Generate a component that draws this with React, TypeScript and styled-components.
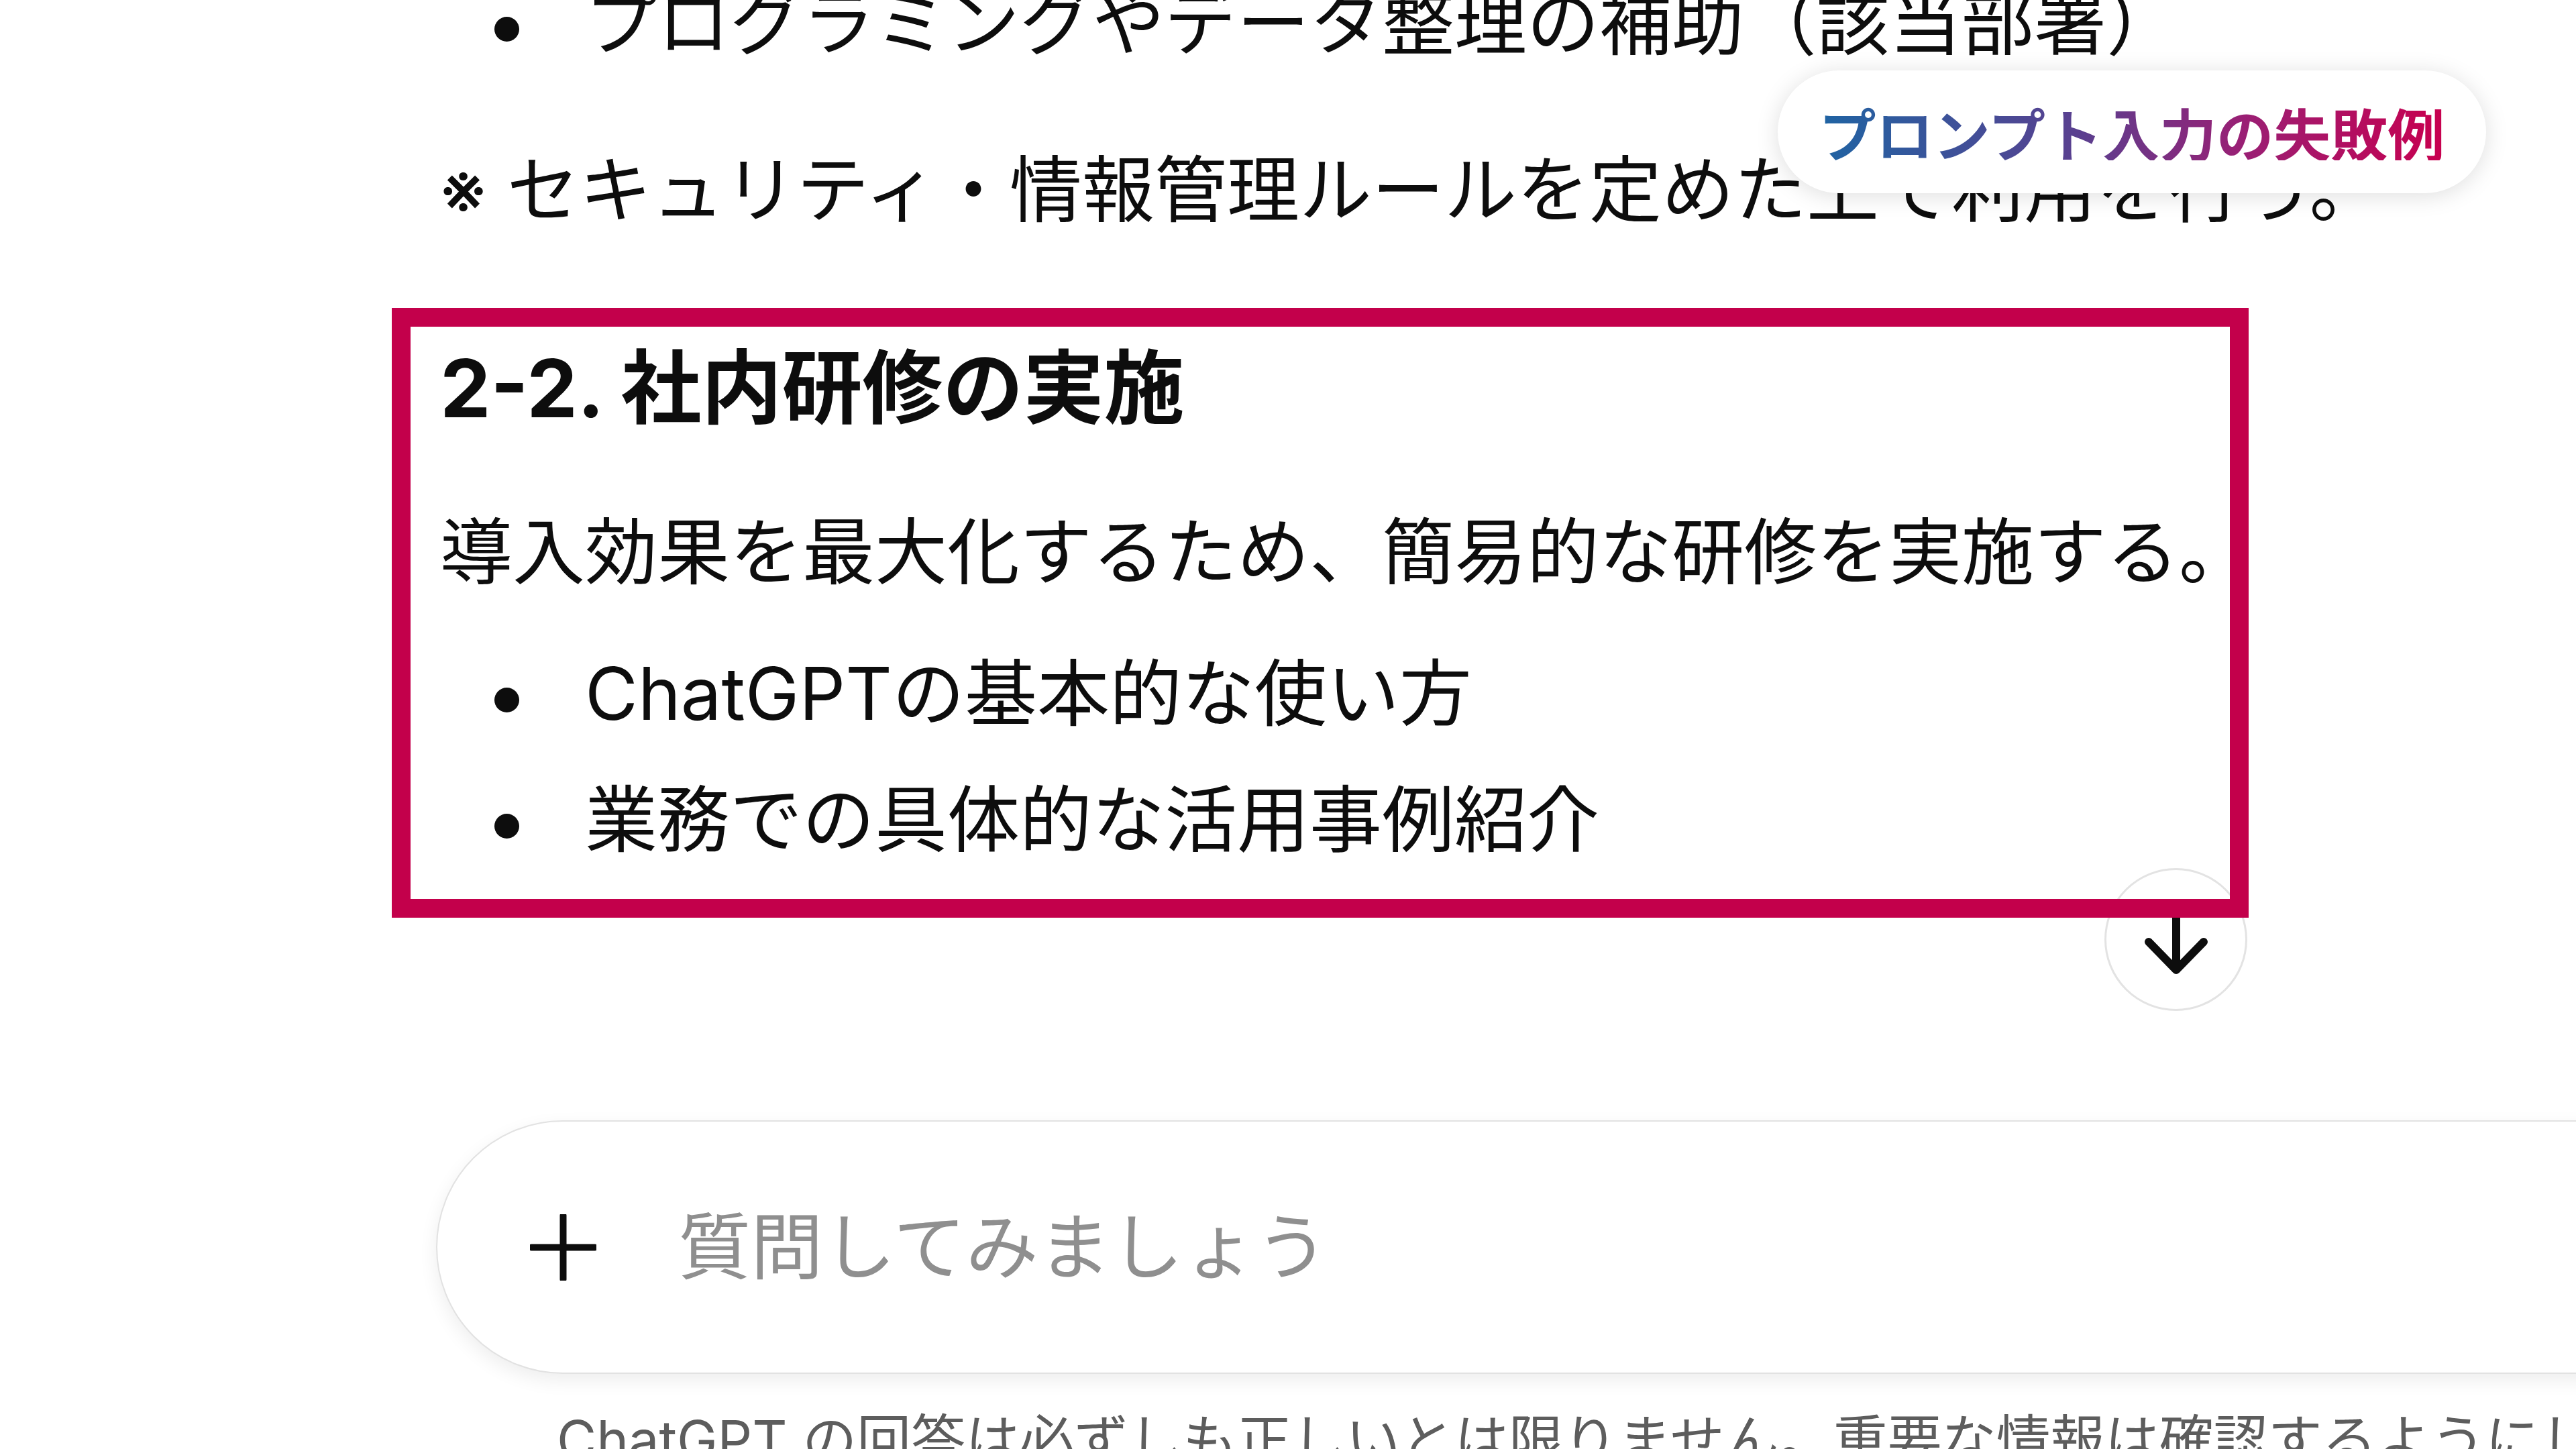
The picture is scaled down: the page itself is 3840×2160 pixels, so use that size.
import styled, { createGlobalStyle } from "styled-components";

const GlobalStyle = createGlobalStyle`
  html, body {
    margin: 0;
    padding: 0;
    background: #fff;
  }
  body {
    font-family: Inter, "Noto Sans CJK JP", sans-serif;
    color: #0d0d0d;
  }
  * {
    box-sizing: border-box;
  }
`;

const Page = styled.div`
  position: relative;
  z-index: 0;
  width: 3840px;
  height: 2160px;
  overflow: hidden;
  background: #fff;
  display: flex;
  flex-direction: column;
`;

const Thread = styled.main`
  margin-left: 584px;
  width: 2768px;
  display: flex;
  flex-direction: column;
`;

const Lead = styled.div`
  padding-left: 72px;
  padding-top: 1px;
  margin-top: -52px;
`;

const List = styled.ul<{ $top?: number }>`
  list-style: none;
  margin: ${(p) => p.$top ?? 0}px 0 0;
  padding: 0;
  display: flex;
  flex-direction: column;
  gap: 18px;
`;

const Item = styled.li`
  display: flex;
  align-items: center;
  font-size: 108px;
  line-height: 170px;
  white-space: nowrap;
`;

const Dot = styled.span`
  flex: 0 0 auto;
  width: 37px;
  height: 37px;
  border-radius: 50%;
  background: #0d0d0d;
  margin: 18px 98px 0 81px;
`;

const Note = styled.p`
  margin: 79px 0 0;
  font-size: 108px;
  line-height: 170px;
  white-space: nowrap;
`;

const Highlight = styled.section`
  position: relative;
  margin-top: 91px;
  border: 28px solid #c3004b;
  padding: 17px 0 33px 44px;
`;

const Heading = styled.h3`
  margin: 0;
  font-size: 120px;
  line-height: 150px;
  font-weight: 700;
  white-space: nowrap;
`;

const Paragraph = styled.p`
  margin: 84px 0 0;
  font-size: 108px;
  line-height: 170px;
  white-space: nowrap;
`;

const ScrollButton = styled.button`
  position: absolute;
  z-index: -1;
  left: 2525px;
  top: 807px;
  width: 213px;
  height: 213px;
  border-radius: 50%;
  border: 3px solid #e3e3e3;
  background: #fff;
  padding: 0;
  display: grid;
  place-items: center;
`;

const Composer = styled.div`
  margin: 302px 0 0 650px;
  width: 3400px;
  height: 378px;
  flex: 0 0 auto;
  border: 2px solid #e2e2e2;
  border-radius: 189px;
  background: #fff;
  box-shadow: 0 10px 28px rgba(0, 0, 0, 0.07);
  display: flex;
  align-items: center;
  padding-left: 138px;
  gap: 122px;
`;

const Placeholder = styled.span`
  font-size: 108px;
  line-height: 150px;
  color: #8f8f8f;
  white-space: nowrap;
`;

const Disclaimer = styled.p`
  margin: 39px 0 0;
  padding-left: 830px;
  font-size: 81px;
  line-height: 120px;
  color: #5d5d5d;
  white-space: nowrap;
`;

const Badge = styled.div`
  position: absolute;
  left: 2650px;
  top: 105px;
  width: 1056px;
  height: 183px;
  border-radius: 92px;
  background: #fff;
  box-shadow: 0 4px 34px rgba(0, 0, 0, 0.13);
  display: grid;
  place-items: center;
`;

const BadgeText = styled.span`
  font-family: "Noto Sans CJK JP", sans-serif;
  font-size: 85px;
  line-height: 1;
  font-weight: 700;
  white-space: nowrap;
  background: linear-gradient(90deg, #1f64a3 0%, #5b3f8f 42%, #9a1f74 68%, #c8004f 100%);
  -webkit-background-clip: text;
  background-clip: text;
  color: transparent;
`;

const ArrowDown = () => (
  <svg width="110" height="110" viewBox="-55 -55 110 110">
    <path
      d="M0 -47 V45 M-41 3 L0 45 L41 3"
      fill="none"
      stroke="#0d0d0d"
      strokeWidth="12"
      strokeLinecap="round"
      strokeLinejoin="round"
    />
  </svg>
);

const Plus = () => (
  <svg width="99" height="99" viewBox="0 0 99 99">
    <path d="M49.5 2 V97 M2 49.5 H97" stroke="#0d0d0d" strokeWidth="10" strokeLinecap="round" />
  </svg>
);

const App = () => {
  return (
    <Page>
      <GlobalStyle />
      <Thread>
        <Lead>
          <List>
            <Item>
              <Dot />
              プログラミングやデータ整理の補助（該当部署）
            </Item>
          </List>
          <Note>※ セキュリティ・情報管理ルールを定めた上で利用を行う。</Note>
        </Lead>
        <Highlight>
          <ScrollButton aria-label="scroll down">
            <ArrowDown />
          </ScrollButton>
          <Heading>2-2. 社内研修の実施</Heading>
          <Paragraph>導入効果を最大化するため、簡易的な研修を実施する。</Paragraph>
          <List $top={41}>
            <Item>
              <Dot />
              ChatGPTの基本的な使い方
            </Item>
            <Item>
              <Dot />
              業務での具体的な活用事例紹介
            </Item>
          </List>
        </Highlight>
      </Thread>
      <Composer>
        <Plus />
        <Placeholder>質問してみましょう</Placeholder>
      </Composer>
      <Disclaimer>
        ChatGPT の回答は必ずしも正しいとは限りません。重要な情報は確認するようにしてください。
      </Disclaimer>
      <Badge>
        <BadgeText>プロンプト入力の失敗例</BadgeText>
      </Badge>
    </Page>
  );
};

export default App;
